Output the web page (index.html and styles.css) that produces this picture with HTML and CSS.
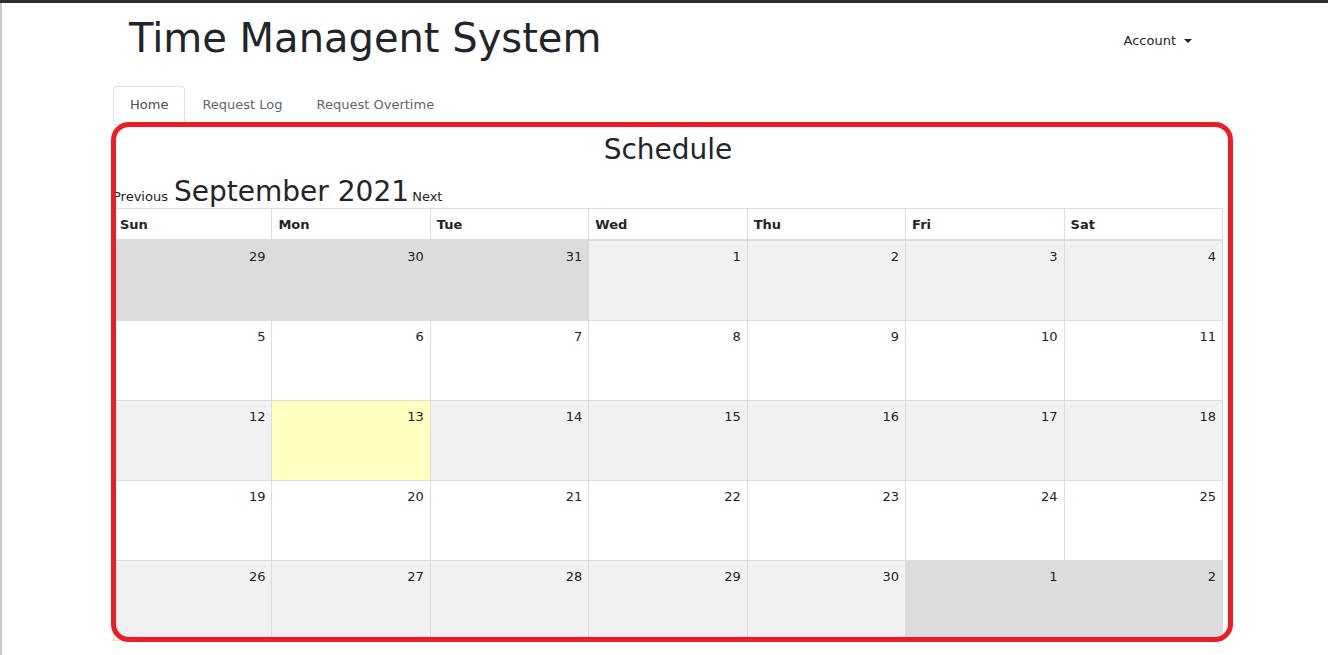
FILE: index.html
```html
<!DOCTYPE html>
<html>
<head>
<meta charset="utf-8">
<title>Time Managent System</title>
<link rel="stylesheet" href="styles.css">
</head>
<body>
<div class="topbar"></div>
<div class="page">
  <div class="container">
    <header class="header">
      <h1 class="title">Time Managent System</h1>
      <a class="account">Account<span class="caret"></span></a>
    </header>
    <ul class="tabs">
      <li class="tab active">Home</li>
      <li class="tab">Request Log</li>
      <li class="tab">Request Overtime</li>
    </ul>
    <main class="panel">
      <h2 class="schedule">Schedule</h2>
      <div class="month-nav">
        <a class="nav-link">Previous</a>
        <span class="month">September 2021</span>
        <a class="nav-link next">Next</a>
      </div>
      <table class="calendar">
        <thead>
          <tr>
            <th><div class="hd">Sun</div></th>
            <th><div class="hd">Mon</div></th>
            <th><div class="hd">Tue</div></th>
            <th><div class="hd">Wed</div></th>
            <th><div class="hd">Thu</div></th>
            <th><div class="hd">Fri</div></th>
            <th><div class="hd">Sat</div></th>
          </tr>
        </thead>
        <tbody>
          <tr class="shade">
            <td class="other"><div class="day">29</div></td>
            <td class="other"><div class="day">30</div></td>
            <td class="other"><div class="day">31</div></td>
            <td><div class="day">1</div></td>
            <td><div class="day">2</div></td>
            <td><div class="day">3</div></td>
            <td><div class="day">4</div></td>
          </tr>
          <tr>
            <td><div class="day">5</div></td>
            <td><div class="day">6</div></td>
            <td><div class="day">7</div></td>
            <td><div class="day">8</div></td>
            <td><div class="day">9</div></td>
            <td><div class="day">10</div></td>
            <td><div class="day">11</div></td>
          </tr>
          <tr class="shade">
            <td><div class="day">12</div></td>
            <td class="today"><div class="day">13</div></td>
            <td><div class="day">14</div></td>
            <td><div class="day">15</div></td>
            <td><div class="day">16</div></td>
            <td><div class="day">17</div></td>
            <td><div class="day">18</div></td>
          </tr>
          <tr>
            <td><div class="day">19</div></td>
            <td><div class="day">20</div></td>
            <td><div class="day">21</div></td>
            <td><div class="day">22</div></td>
            <td><div class="day">23</div></td>
            <td><div class="day">24</div></td>
            <td><div class="day">25</div></td>
          </tr>
          <tr class="shade">
            <td><div class="day">26</div></td>
            <td><div class="day">27</div></td>
            <td><div class="day">28</div></td>
            <td><div class="day">29</div></td>
            <td><div class="day">30</div></td>
            <td class="other"><div class="day">1</div></td>
            <td class="other"><div class="day">2</div></td>
          </tr>
        </tbody>
      </table>
    </main>
  </div>
</div>
<div class="highlight"></div>
</body>
</html>
```

FILE: styles.css
```css
html, body {
  margin: 0;
  padding: 0;
  background: #fff;
}

body {
  font-family: "DejaVu Sans", Verdana, sans-serif;
  color: #212529;
  font-size: 13px;
  line-height: 20px;
  position: relative;
  min-height: 655px;
  overflow: hidden;
}

.topbar {
  height: 3px;
  background: #2f2f2f;
}

.page {
  border-left: 2px solid #c9c9c9;
  min-height: 652px;
  box-sizing: border-box;
}

.container {
  margin-left: 111px;
  width: 1110px;
}

.header {
  display: flex;
  align-items: center;
  justify-content: space-between;
  padding: 11px 31px 0 16px;
}

.title {
  margin: 0;
  font-size: 40px;
  line-height: 48px;
  font-weight: normal;
  color: #212529;
}

.account {
  margin-top: 6px;
  color: #212529;
  font-size: 13px;
  display: flex;
  align-items: center;
}

.caret {
  display: inline-block;
  margin-left: 8px;
  width: 0;
  height: 0;
  border-top: 4px solid #212529;
  border-left: 4px solid transparent;
  border-right: 4px solid transparent;
}

.tabs {
  list-style: none;
  margin: 24px 0 0;
  padding: 0;
  display: flex;
}

.tab {
  padding: 8px 16px;
  border: 1px solid transparent;
  border-top-left-radius: 4px;
  border-top-right-radius: 4px;
  color: #5f666d;
}

.tab.active {
  border-color: #dee2e6 #dee2e6 #fff;
  color: #495057;
}

.panel {
  border-top: 1px solid #dee2e6;
}

.schedule {
  margin: 8px 0 0;
  text-align: center;
  font-size: 28px;
  line-height: 34px;
  font-weight: normal;
}

.month-nav {
  margin-top: 7px;
  height: 34px;
  padding-top: 2px;
  box-sizing: border-box;
  line-height: 20px;
  color: #212529;
  white-space: nowrap;
}

.month {
  font-size: 28px;
  line-height: 32px;
  margin-left: 2px;
}

.nav-link {
  color: #212529;
}

.nav-link.next {
  margin-left: -1px;
}

.calendar {
  width: 1110px;
  table-layout: fixed;
  border-collapse: collapse;
  margin-top: 0;
}

.calendar th,
.calendar td {
  border: 1px solid #dddddd;
  padding: 0;
  vertical-align: top;
}

.calendar th {
  border-bottom: 2px solid #dddddd;
  text-align: left;
  font-weight: bold;
  background: #fff;
}

.hd {
  padding: 6px 6px 4px;
  height: 30px;
  box-sizing: border-box;
}

.day {
  height: 79px;
  box-sizing: border-box;
  padding: 6px 6px 0;
  text-align: right;
  color: #222;
}

.calendar tr.shade td {
  background: #f1f1f1;
}

.calendar tr td.other {
  background: #dcdcdc;
}

.calendar tr td.today {
  background: #ffffc0;
}

.highlight {
  position: absolute;
  left: 111px;
  top: 122px;
  width: 1122px;
  height: 520px;
  box-sizing: border-box;
  border: 5px solid #ed1c24;
  border-radius: 18px;
  pointer-events: none;
}
```
